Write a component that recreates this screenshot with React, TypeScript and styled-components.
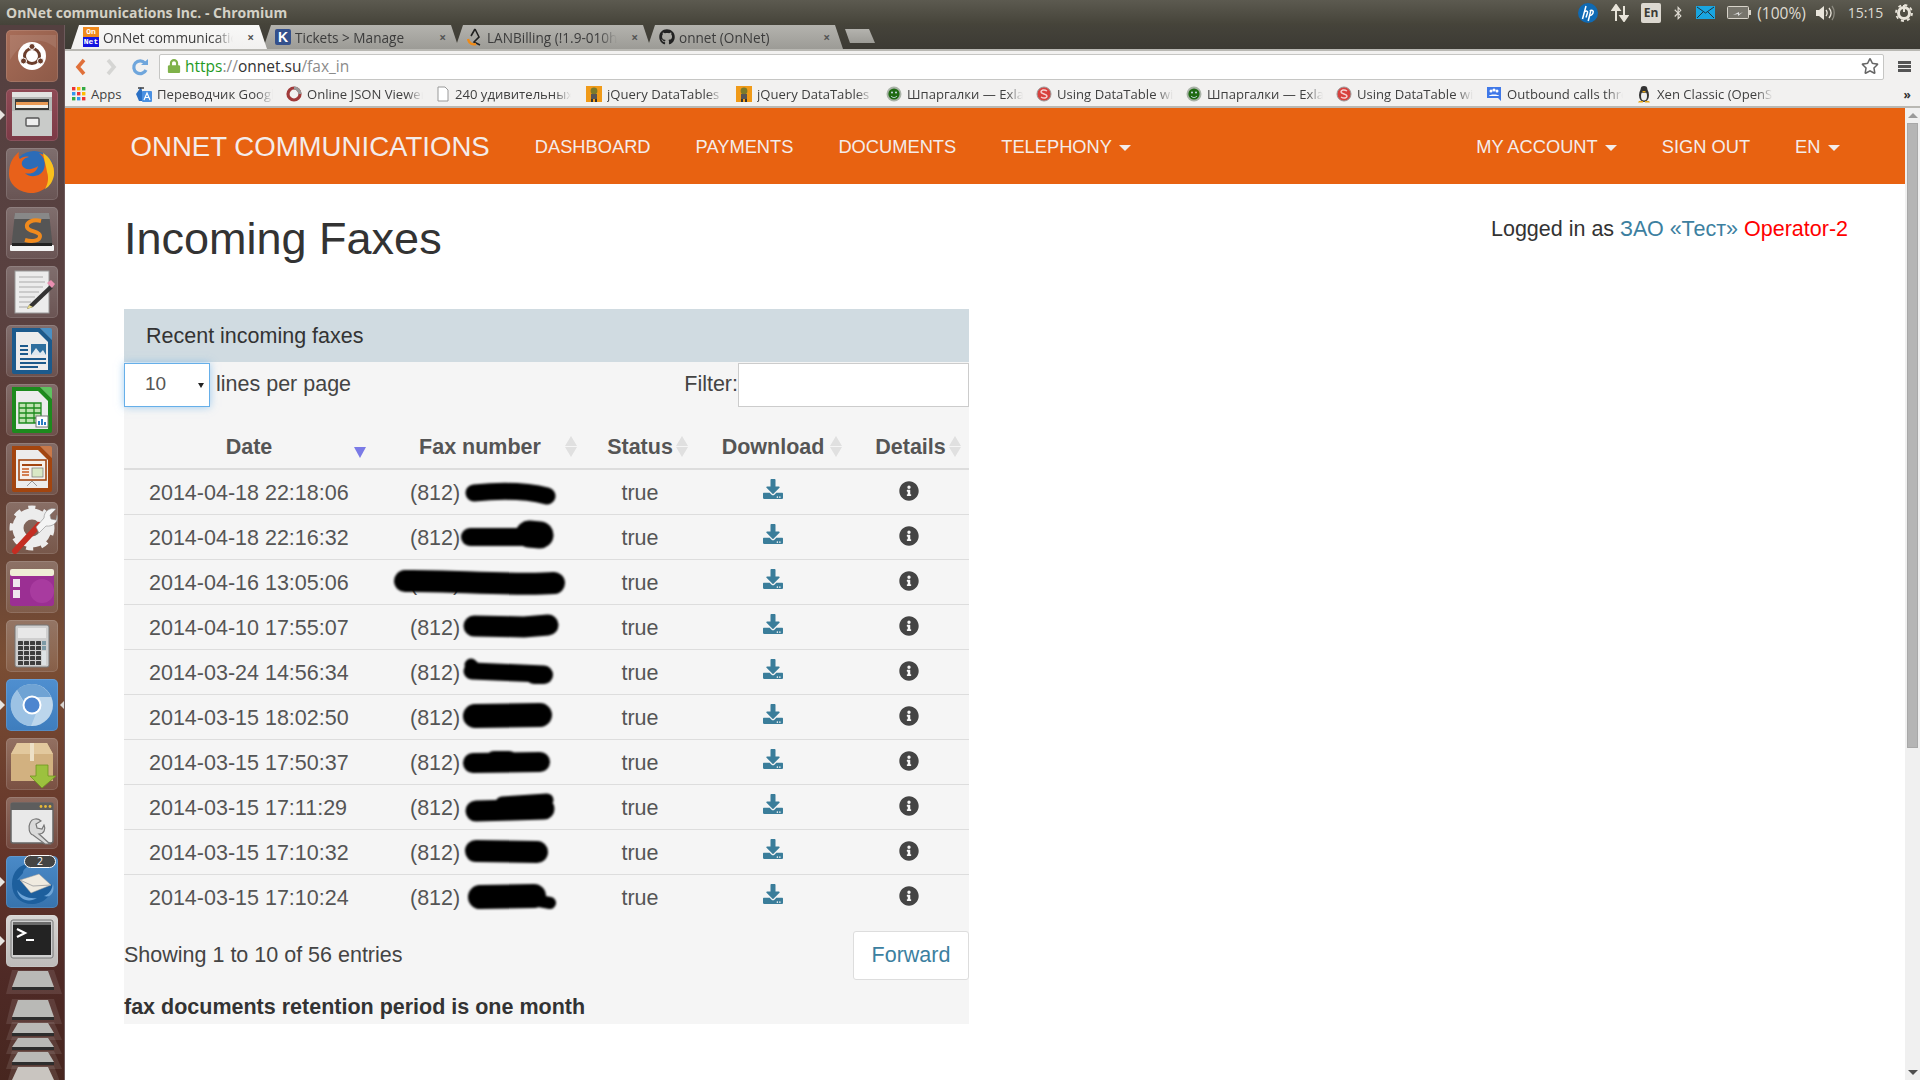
import React from "react";
import styled, { createGlobalStyle } from "styled-components";
import { FaDownload, FaInfoCircle, FaGithub, FaRegStar, FaBluetoothB, FaLock } from "react-icons/fa";

const Global = createGlobalStyle`
  html, body { margin: 0; padding: 0; width: 1920px; height: 1080px; overflow: hidden; background: #fff; }
  * { box-sizing: border-box; }
  #root { width: 1920px; height: 1080px; }
`;

const UI = `"Open Sans", "Noto Sans", sans-serif`;
const WEB = `"Liberation Sans", Arial, sans-serif`;

const Screen = styled.div`
  width: 1920px; height: 1080px; display: flex; flex-direction: column; overflow: hidden;
`;
const TitleBar = styled.header`
  height: 25px; flex: none; display: flex; align-items: center; justify-content: space-between;
  padding: 0 0 0 6px; background: linear-gradient(#5c5a50, #454339);
`;
const WindowTitle = styled.div`
  font: 700 14px ${UI}; color: #d4d1c6; white-space: nowrap;
`;
const Tray = styled.div`
  display: flex; align-items: center; height: 25px; color: #dfdbd2; font: 400 14px ${UI};
`;
const TraySlot = styled.div<{ $w: number; $size?: number }>`
  width: ${p => p.$w}px; display: flex; align-items: center; justify-content: center; height: 25px; white-space: nowrap;
  ${p => p.$size ? `font-size: ${p.$size}px;` : ""}
`;
const LangBox = styled.div`
  width: 20px; height: 20px; border-radius: 2px; background: #dcd8d0; color: #3b3a34;
  font: 700 12px ${UI}; display: flex; align-items: center; justify-content: center;
`;
const Desk = styled.div`
  flex: 1; display: flex; min-height: 0;
`;
const Launcher = styled.nav`
  width: 65px; flex: none; position: relative; overflow: hidden; display: flex; flex-direction: column; gap: 7px;
  padding: 5px 0 0 6px; border-right: 1px solid #6d5a5c;
  background: linear-gradient(#544040 0%, #5a4140 28%, #5c3c36 38%, #6a4636 52%, #7a4e34 60%, #64352a 78%, #4f2a26 90%, #47261f 100%);
`;
const Tile = styled.div<{ $bg?: string; $glow?: boolean }>`
  width: 52px; height: 52px; flex: none; border-radius: 5px; position: relative;
  background: ${p => p.$bg || "linear-gradient(rgba(255,255,255,.24), rgba(255,255,255,.1))"};
  box-shadow: inset 0 0 0 1px rgba(255,255,255,.12);
  svg { display: block; }
`;
const Pip = styled.span<{ $side: "left" | "right" }>`
  position: absolute; top: 21px; ${p => p.$side === "left" ? "left: -6px;" : "right: -7px;"}
  width: 0; height: 0; border-top: 5px solid transparent; border-bottom: 5px solid transparent;
  ${p => p.$side === "left" ? "border-left: 5px solid #e8e4e0;" : "border-right: 5px solid #d8d4d0;"}
`;
const FoldedStack = styled.div`
  margin-top: -6px; margin-left: -1px; flex: none;
`;
const Browser = styled.div`
  flex: 1; min-width: 0; display: flex; flex-direction: column;
`;
const TabStrip = styled.div`
  height: 24px; flex: none; display: flex; align-items: flex-end; padding-left: 6px; background: linear-gradient(#45433a, #3c3a34);
`;
const Tab = styled.div<{ $active?: boolean }>`
  width: 196px; height: 24px; flex: none; margin-right: -4px; padding: 0 13px 0 12px; display: flex; align-items: center; gap: 4px;
  clip-path: polygon(0 100%, 8px 0, 188px 0, 196px 100%);
  background: ${p => p.$active ? "linear-gradient(#f8f8f7, #f2f1f0)" : "linear-gradient(#b4b3ae, #9c9b96)"};
  position: relative; z-index: ${p => p.$active ? 2 : 1};
  color: #3c3c3c; font: 400 13.6px ${UI};
`;
const FadeText = styled.span<{ $w: number }>`
  width: ${p => p.$w}px; flex: none; overflow: hidden; white-space: nowrap;
  -webkit-mask-image: linear-gradient(90deg, #000 86%, transparent);
  mask-image: linear-gradient(90deg, #000 86%, transparent);
`;
const TabClose = styled.span`
  margin-left: auto; font: 700 12px ${UI}; color: #555;
`;
const NewTab = styled.div`
  width: 30px; height: 14px; margin: 0 0 6px 6px; background: linear-gradient(#b4b3ae, #9c9b96);
  clip-path: polygon(0 0, 24px 0, 30px 100%, 5px 100%);
`;
const FavOn = styled.div`
  width: 16px; height: 20px; display: flex; flex-direction: column; flex: none; overflow: hidden;
  font: 700 8px/10px "Liberation Mono", monospace; text-align: center; color: #fff;
`;
const FavPart = styled.span<{ $bg: string }>`
  height: 10px; background: ${p => p.$bg};
`;
const FavK = styled.div`
  width: 16px; height: 16px; flex: none; border-radius: 2px; background: #33508c; color: #fff;
  font: 700 14px/16px "Liberation Sans", sans-serif; text-align: center;
`;
const Toolbar = styled.div`
  height: 31px; flex: none; background: #f2f1f0; border-top: 2px solid #b9b8b3; display: flex; align-items: center; padding: 2px 0 0 0; position: relative;
`;
const NavIcon = styled.div<{ $w: number }>`
  width: ${p => p.$w}px; flex: none; display: flex; justify-content: center; align-items: center;
`;
const Omnibox = styled.div`
  width: 1725px; height: 26px; margin-left: 5px; background: #fff; border: 1px solid #c6c6c4; border-radius: 2px; display: flex; align-items: center;
  padding: 0 4px 2px 7px; font: 400 15.5px ${UI};
`;
const UrlGreen = styled.span`
  color: #1f9a1f; margin-left: 4px;
`;
const UrlDim = styled.span`
  color: #8b8b8b;
`;
const UrlHost = styled.span`
  color: #333;
`;
const Star = styled.div`
  margin-left: auto; color: #666; display: flex;
`;
const Burger = styled.div`
  width: 13px; height: 11px; margin-left: 14px; border-top: 3px solid #555; border-bottom: 3px solid #555; position: relative;
  &::after { content: ""; position: absolute; left: 0; right: 0; top: 1px; height: 3px; background: #555; }
`;
const Bookmarks = styled.div`
  height: 28px; flex: none; display: flex; align-items: center; padding: 2px 0 0 7px; background: #f2f1f0; border-bottom: 2px solid #b9b8b3;
  font: 400 13.1px ${UI}; color: #3f3f3f; position: relative;
`;
const Mark = styled.div<{ $w: number }>`
  width: ${p => p.$w}px; flex: none; display: flex; align-items: center; gap: 5px; overflow: hidden;
`;
const More = styled.div`
  margin-left: auto; margin-right: 9px; font: 700 12px ${UI}; color: #333;
`;
const PageWrap = styled.div`
  flex: 1; min-height: 0; display: flex;
`;
const Page = styled.main`
  flex: 1; min-width: 0; display: flex; flex-direction: column; background: #fff; font-family: ${WEB}; color: #333;
`;
const Scrollbar = styled.div`
  width: 15px; flex: none; background: #f0f0f0; display: flex; flex-direction: column; align-items: center; padding-top: 5px;
`;
const ScrollUp = styled.span`
  width: 0; height: 0; border-left: 5px solid transparent; border-right: 5px solid transparent; border-bottom: 5px solid #9a9a9a;
`;
const ScrollThumb = styled.span`
  width: 11px; height: 625px; background: #b5b5b5; border: 1px solid #a8a8a8; margin-top: 5px;
`;
const ScrollDown = styled.span`
  width: 0; height: 0; margin-top: auto; margin-bottom: 5px; border-left: 5px solid transparent; border-right: 5px solid transparent; border-top: 5px solid #505050;
`;
const NavBar = styled.div`
  height: 76px; flex: none; background: #e86211; display: flex; align-items: center; padding: 2px 43px 0 43px; color: #f4ecea;
`;
const Brand = styled.div`
  font-size: 27.6px; padding: 0 22.5px; white-space: nowrap;
`;
const NavItem = styled.div`
  font-size: 18.3px; padding: 0 22.5px; white-space: nowrap; display: flex; align-items: center; gap: 7px;
`;
const Caret = styled.span`
  width: 0; height: 0; border-left: 6px solid transparent; border-right: 6px solid transparent; border-top: 6px solid #f4ecea; margin-top: 2px;
`;
const Spacer = styled.div`
  flex: 1;
`;
const Content = styled.div`
  flex: 1; min-height: 0; padding: 0 57px 0 59px; position: relative;
`;
const HeadRow = styled.div`
  height: 125px; display: flex; justify-content: space-between; align-items: flex-start;
`;
const PageTitle = styled.h1`
  margin: 24px 0 0; font-size: 45px; line-height: 62px; font-weight: 400;
`;
const Logged = styled.div`
  margin-top: 33px; font-size: 21.5px; line-height: 24px; white-space: nowrap;
`;
const Link = styled.a`
  color: #3c80a0;
`;
const Red = styled.span`
  color: #f00;
`;
const Panel = styled.section`
  width: 845px; height: 715px; background: #f5f5f5; display: flex; flex-direction: column;
`;
const PanelHead = styled.div`
  height: 53px; flex: none; background: #d0dbe1; padding: 2px 0 0 22px; display: flex; align-items: center; font-size: 21.5px; color: #333;
`;
const Controls = styled.div`
  height: 46px; flex: none; display: flex; align-items: flex-start; padding-top: 1px; font-size: 21.5px;
`;
const SelectWrap = styled.div`
  position: relative; width: 86px; height: 44px; flex: none;
`;
const Select = styled.select`
  appearance: none; width: 100%; height: 100%; padding: 0 0 3px 20px; border: 1px solid #66afe9; border-radius: 0; background: #fff;
  box-shadow: 0 0 8px rgba(102,175,233,.6); font: 400 19px ${WEB}; color: #555; outline: none;
`;
const SelectCaret = styled.span`
  position: absolute; right: 6px; top: 20px; width: 0; height: 0; border-left: 3px solid transparent; border-right: 3px solid transparent; border-top: 5px solid #222;
`;
const LinesLabel = styled.span`
  margin-left: 6px; line-height: 42px; color: #444;
`;
const FilterLabel = styled.span`
  margin-left: auto; line-height: 42px; color: #444;
`;
const FilterInput = styled.input`
  width: 231px; height: 44px; border: 1px solid #ccc; background: #fff; padding: 0 10px; outline: none;
`;
const Table = styled.table`
  border-collapse: collapse; table-layout: fixed; width: 845px; flex: none; font-size: 21.5px; color: #555;
`;
const Th = styled.th<{ $w: number }>`
  width: ${p => p.$w}px; height: 61px; padding: 19px 0 0; font-weight: 700; text-align: center; position: relative; border-bottom: 2px solid #ddd; white-space: nowrap;
`;
const Td = styled.td`
  height: 45px; padding: 0; text-align: center; border-top: 1px solid #ddd; position: relative; white-space: nowrap;
`;
const TextTd = styled(Td)`
  padding-top: 4px;
`;
const TdDate = styled(TextTd)`
  text-align: left; padding-left: 25px;
`;
const TdFax = styled(TextTd)`
  text-align: left; padding-left: 36px;
`;
const TdInfo = styled(TextTd)`
  padding-right: 4px;
`;
const Tr = styled.tr`
  &:first-child td { border-top: 0; }
`;
const SortArrows = styled.span<{ $right: number }>`
  position: absolute; right: ${p => p.$right}px; top: 28px; width: 12px; height: 21px; display: flex; flex-direction: column; justify-content: space-between;
  &::before, &::after { content: ""; width: 0; height: 0; border-left: 6px solid transparent; border-right: 6px solid transparent; }
  &::before { border-bottom: 10px solid #e0e0e0; }
  &::after { border-top: 10px solid #e0e0e0; }
`;
const SortDown = styled.span`
  position: absolute; right: 8px; top: 39px; width: 0; height: 0; border-left: 6px solid transparent; border-right: 6px solid transparent; border-top: 11px solid #7a7ae6;
`;
const Blot = styled.svg`
  position: absolute; left: 0; top: 0; filter: blur(1px); pointer-events: none;
`;
const DownloadIcon = styled(FaDownload)`
  color: #3a7d9a; font-size: 20px; vertical-align: -1px; margin-top: -3px;
`;
const InfoIcon = styled(FaInfoCircle)`
  color: #444; font-size: 20px; vertical-align: -1px; margin-top: -3px;
`;
const Footer = styled.div`
  flex: none; margin-top: 12px; height: 49px; display: flex; align-items: center; justify-content: space-between; font-size: 21.5px; color: #444;
`;
const ShowText = styled.span`
  margin-top: 0;
`;
const Forward = styled.button`
  width: 116px; height: 49px; background: #fff; border: 1px solid #ddd; border-radius: 3px; font: 400 21.5px ${WEB}; color: #3c80a0; padding: 0;
`;
const Note = styled.div`
  margin-top: 15px; font-size: 21.5px; font-weight: 700; color: #333; line-height: 24px;
`;

/* ---------- launcher drawings ---------- */
const UbuntuIcon = () => (
  <svg width="52" height="52" viewBox="0 0 52 52">
    <path d="M4 30C16 8 36 6 50 18V5H4z" fill="#fff" opacity=".1" />
    <circle cx="26" cy="26" r="14" fill="#fff" />
    <circle cx="26" cy="26" r="7.5" fill="none" stroke="#6b3e2c" strokeWidth="3" />
    <circle cx="26" cy="16.5" r="3" fill="#6b3e2c" stroke="#fff" strokeWidth="1" />
    <circle cx="17.5" cy="31" r="3" fill="#6b3e2c" stroke="#fff" strokeWidth="1" />
    <circle cx="34.5" cy="31" r="3" fill="#6b3e2c" stroke="#fff" strokeWidth="1" />
  </svg>
);
const FilesIcon = () => (
  <svg width="52" height="52" viewBox="0 0 52 52">
    <rect x="6" y="3" width="40" height="44" rx="2" fill="#b5b7b5" />
    <rect x="6" y="3" width="40" height="5" fill="#e2e2e0" />
    <rect x="9" y="10" width="34" height="11" fill="#3a3a38" />
    <rect x="10" y="13" width="32" height="5" fill="#e89a55" />
    <rect x="10" y="16" width="32" height="3" fill="#f3f0ea" />
    <rect x="6" y="22" width="40" height="25" fill="#c9cbc9" />
    <rect x="20" y="29" width="13" height="8" rx="1" fill="#eee" stroke="#555" strokeWidth="1.4" />
  </svg>
);
const FirefoxIcon = () => (
  <svg width="52" height="52" viewBox="0 0 52 52">
    <circle cx="28" cy="23" r="20" fill="#2b6cb8" />
    <path d="M3 26C3 14 8 8 13 4c-1 4 0 6 1 7 2-2 6-3 9-2-5 1-8 4-7 8 1 3 5 5 9 4 5-1 7-3 7-3-1 6-7 9-13 7 5 5 14 4 18-2 4-7 1-14-4-18 8 2 15 10 15 18 0 12-11 22-22 22S3 38 3 26z" fill="#e8611a" />
    <path d="M37 5c7 4 12 13 11 22-1 6-4 11-9 14 3-5 4-11 2-17-1-6-3-13-4-19z" fill="#f9c11d" />
  </svg>
);
const SublimeIcon = () => (
  <svg width="52" height="52" viewBox="0 0 52 52">
    <path d="M9 6h34l4 36H5z" fill="#555" />
    <path d="M9 6h34l1 6H8z" fill="#888" />
    <rect x="4" y="38" width="44" height="6" rx="1" fill="#f2f2f2" />
    <rect x="6" y="36" width="40" height="3" fill="#222" />
    <path d="M35 14c-8-2-15 1-14 6s13 4 13 9-8 6-15 4" fill="none" stroke="#f08a1d" strokeWidth="4" />
  </svg>
);
const EditorIcon = () => (
  <svg width="52" height="52" viewBox="0 0 52 52">
    <rect x="9" y="5" width="34" height="42" fill="#ececec" stroke="#999" />
    <path d="M13 11h24M13 16h26M13 21h24M13 26h20M13 31h16M13 36h12M13 41h10" stroke="#aaa" strokeWidth="1.2" />
    <path d="M23 39l21-20 3 3-20 19-6 2z" fill="#333" />
    <path d="M41 17l4-3 4 4-3 4z" fill="#e88fb0" />
    <path d="M21 43l2-4 4 2z" fill="#e9dc8a" />
  </svg>
);
const OfficeIcon = ({ frame, corner, kind }: { frame: string; corner: string; kind: "w" | "c" | "p" }) => (
  <svg width="52" height="52" viewBox="0 0 52 52">
    <path d="M6 3h28l12 12v32a2 2 0 0 1-2 2H8a2 2 0 0 1-2-2z" fill={frame} />
    <path d="M34 3h10a2 2 0 0 1 2 2v10z" fill={corner} />
    <path d="M10 7h22l10 10v28H10z" fill="#ececec" />
    {kind === "w" && (
      <>
        <path d="M14 21h8M14 25h8M14 29h8M14 34h26M14 38h26M14 42h18" stroke={frame} strokeWidth="2" />
        <rect x="25" y="19" width="15" height="11" fill="#2f6f9e" />
        <path d="M25 30l5-7 4 5 3-3 3 5z" fill="#dfe8ee" />
      </>
    )}
    {kind === "c" && (
      <>
        <path d="M13 19h22v20H13zM13 24h22M13 29h22M13 34h22M20 19v20M28 19v20" fill="#bfe3b0" stroke={frame} strokeWidth="1.3" />
        <rect x="30" y="32" width="12" height="11" fill="#fff" stroke="#777" />
        <path d="M33 41v-4M36 41v-6M39 41v-3" stroke="#2b7bc0" strokeWidth="2" />
      </>
    )}
    {kind === "p" && (
      <>
        <rect x="13" y="17" width="27" height="20" fill="#f5f0ea" stroke={frame} strokeWidth="1.6" />
        <path d="M16 22h20" stroke={frame} strokeWidth="2" />
        <path d="M16 26h7M16 29h7M16 32h7" stroke="#c75b20" strokeWidth="1.6" />
        <rect x="26" y="25" width="11" height="9" fill="#d9e8c5" stroke="#777" strokeWidth=".7" />
        <path d="M21 43l5-5 5 5" fill="none" stroke="#999" />
      </>
    )}
  </svg>
);
const SettingsIcon = () => (
  <svg width="52" height="52" viewBox="0 0 52 52">
    <circle cx="26" cy="26" r="14" fill="none" stroke="#ececec" strokeWidth="11" />
    <circle cx="26" cy="26" r="20" fill="none" stroke="#ececec" strokeWidth="5" strokeDasharray="7 8" />
    <path d="M9 49L33 23" stroke="#c42d22" strokeWidth="6" strokeLinecap="round" />
    <path d="M30 25l8-9c0-7 6-11 12-9l-6 6 1 4 5 1 1-5c2 7-4 12-11 11l-7 7z" fill="#f4f4f4" stroke="#888" strokeWidth=".6" />
  </svg>
);
const WorkspaceIcon = () => (
  <svg width="52" height="52" viewBox="0 0 52 52">
    <rect x="4" y="8" width="44" height="37" rx="3" fill="#9b2f93" />
    <rect x="4" y="8" width="44" height="7" rx="2" fill="#efeed6" />
    <rect x="7" y="18" width="7" height="8" fill="#efe6ee" />
    <rect x="7" y="29" width="7" height="8" fill="#efe6ee" />
    <circle cx="36" cy="30" r="12" fill="#c65bbd" opacity=".3" />
  </svg>
);
const CalcIcon = () => (
  <svg width="52" height="52" viewBox="0 0 52 52">
    <rect x="9" y="5" width="34" height="42" rx="2" fill="#cfcfcf" stroke="#777" />
    <rect x="12" y="8" width="28" height="10" fill="#e8e8e8" />
    {[21, 26, 31, 36, 41].map(y =>
      [12, 18, 24, 30].map(x => <rect key={`${x}-${y}`} x={x} y={y} width="5" height="4" rx=".6" fill="#3d3d3d" />)
    )}
    <rect x="36" y="21" width="4" height="4" fill="#7d9aa6" />
    <rect x="36" y="26" width="4" height="4" fill="#7d9aa6" />
    <rect x="36" y="31" width="4" height="14" fill="#dde2e4" />
  </svg>
);
const ChromiumIcon = () => (
  <svg width="52" height="52" viewBox="0 0 52 52">
    <circle cx="26" cy="26" r="21" fill="#bcd6ec" />
    <path d="M26 5a21 21 0 0 1 19 13H26a8 8 0 0 0-8 5L11 11A21 21 0 0 1 26 5z" fill="#6fa3d4" />
    <path d="M11 11l9 17c2 4 7 6 11 4l-6 15A21 21 0 0 1 11 11z" fill="#9cc2e4" />
    <circle cx="26" cy="26" r="9.5" fill="#fff" />
    <circle cx="26" cy="26" r="7.5" fill="#4e86cf" />
  </svg>
);
const PackageIcon = () => (
  <svg width="52" height="52" viewBox="0 0 52 52">
    <path d="M11 5h30l6 11v27H5V16z" fill="#d2b180" />
    <path d="M11 5h30l6 11H5z" fill="#e2c89d" />
    <rect x="24" y="5" width="4" height="18" fill="#ede0c6" />
    <path d="M30 27h12v11h8L36 50 24 38h6z" fill="#9cc13e" stroke="#6f9420" strokeWidth=".8" />
  </svg>
);
const ToolIcon = () => (
  <svg width="52" height="52" viewBox="0 0 52 52">
    <rect x="5" y="6" width="42" height="40" rx="2" fill="#e9e9e9" stroke="#666" strokeWidth="1.5" />
    <rect x="5" y="6" width="42" height="7" fill="#5d5d5d" />
    <circle cx="35" cy="9.5" r="1.4" fill="#e8b83a" /><circle cx="39.5" cy="9.5" r="1.4" fill="#e8b83a" /><circle cx="44" cy="9.5" r="1.4" fill="#e8b83a" />
    <path d="M24 26c2-5 8-5 11-2l-5 3 1 4 5 1 2-4c2 4 0 9-5 9l11 10h-5l-12-9c-4-1-5-8-3-12z" fill="#dadada" stroke="#777" strokeWidth="1.2" />
  </svg>
);
const BirdIcon = () => (
  <svg width="52" height="52" viewBox="0 0 52 52">
    <path d="M6 28C6 14 16 6 28 8c-8 2-11 6-11 9l-6 7 8-1 24 4 3 2c0 12-10 19-20 19C14 48 6 40 6 28z" fill="#1d5f9d" />
    <path d="M14 24l19-6 12 11-20 8z" fill="#f0ebe0" stroke="#999" strokeWidth=".5" />
    <path d="M14 24l13 6 18-1" fill="none" stroke="#aaa" />
    <path d="M38 40c5-2 8-6 9-12 2 8-2 14-9 12zM11 34c4 6 12 9 20 8-8 5-18 2-20-8z" fill="#6ea5d8" />
  </svg>
);
const Badge = styled.span`
  position: absolute; right: 2px; top: -1px; width: 32px; height: 13px; border-radius: 7px; background: #444; border: 1.5px solid #fff;
  color: #fff; font: 400 10.5px/10px ${UI}; text-align: center;
`;
const TerminalIcon = () => (
  <svg width="52" height="52" viewBox="0 0 52 52">
    <rect x="5" y="5" width="42" height="38" rx="2" fill="#cfcfcf" stroke="#777" />
    <rect x="7" y="7" width="38" height="33" fill="#232323" />
    <rect x="7" y="7" width="38" height="3" fill="#6b6b6b" />
    <path d="M11 14l8 4-8 4" fill="none" stroke="#fff" strokeWidth="2.2" />
    <path d="M20 25h8" stroke="#fff" strokeWidth="2" />
  </svg>
);
const Folded = () => (
  <svg width="58" height="118" viewBox="0 0 58 118">
    {[[2, 20], [31, 21], [54, 14], [69, 13], [83, 14], [98, 17]].map(([y, h], i) => (
      <g key={i}>
        <path d={`M7 ${y}H49L57 ${y + h + 4}H1z`} fill="#fff" opacity=".1" />
        <path d={`M13 ${y + 1}H43L49 ${y + h - 3}H7z`} fill={i === 5 ? "#c9c5c0" : "#b9b9b6"} />
        <path d={`M7 ${y + h - 3}H49V${y + h}H7z`} fill="#2d2d2d" />
      </g>
    ))}
  </svg>
);

/* ---------- little favicons ---------- */
const AppsGrid = () => (
  <svg width="14" height="14" viewBox="0 0 14 14">
    {["#e33", "#fb0", "#3a4", "#39e", "#e33", "#fb0", "#3a4", "#39e", "#e33"].map((c, i) => (
      <rect key={i} x={(i % 3) * 5} y={Math.floor(i / 3) * 5} width="3.4" height="3.4" fill={c} />
    ))}
  </svg>
);
const Translate = () => (
  <svg width="16" height="18" viewBox="0 0 16 18">
    <path d="M0 9L5 2l2 7 3 7H3z" fill="#2a6fc4" />
    <rect x="6" y="6" width="10" height="11" rx="1" fill="#4a90e2" />
    <path d="M8 15l3-7 3 7M9.2 12.5h3.6" stroke="#fff" fill="none" strokeWidth="1.2" />
    <path d="M2 3h6" stroke="#333" strokeWidth="1.4" />
  </svg>
);
const JsonFav = () => (
  <svg width="16" height="18" viewBox="0 0 16 18">
    <circle cx="8" cy="9" r="6" fill="none" stroke="#a03a3a" strokeWidth="3.2" />
    <path d="M8 3a6 6 0 0 1 6 6" fill="none" stroke="#999" strokeWidth="3.2" />
  </svg>
);
const DocFav = () => (
  <svg width="14" height="18" viewBox="0 0 14 18">
    <path d="M2 2h7l3 3v11H2z" fill="#fff" stroke="#999" />
  </svg>
);
const JqFav = () => (
  <svg width="16" height="18" viewBox="0 0 16 18">
    <rect y="1" width="16" height="16" fill="#f09a18" />
    <circle cx="8" cy="6" r="3.4" fill="#7a7a2a" />
    <rect x="5" y="9" width="6" height="5" fill="#555" />
    <rect x="5" y="14" width="2" height="3" fill="#333" /><rect x="9" y="14" width="2" height="3" fill="#333" />
  </svg>
);
const SmileFav = () => (
  <svg width="16" height="18" viewBox="0 0 16 18">
    <circle cx="8" cy="9" r="7.5" fill="#aab3a8" />
    <circle cx="8" cy="9" r="5.6" fill="#1e6a12" />
    <circle cx="6" cy="7.5" r="1" fill="#cde" /><circle cx="10" cy="7.5" r="1" fill="#cde" />
    <path d="M5 11c2 2 4 2 6 0" stroke="#cde" fill="none" />
  </svg>
);
const RedFav = () => (
  <svg width="16" height="18" viewBox="0 0 16 18">
    <circle cx="8" cy="9" r="7" fill="#d8413e" stroke="#999" />
    <path d="M11 6c-3-2-6-1-6 1s6 2 6 4-3 3-6 1" stroke="#f5d0d0" fill="none" strokeWidth="1.5" />
  </svg>
);
const MeetFav = () => (
  <svg width="16" height="18" viewBox="0 0 16 18">
    <path d="M1 2h14v14l-3-3H1z" fill="#3f78e8" />
    <circle cx="5" cy="6" r="1.5" fill="#fff" /><circle cx="11" cy="6" r="1.5" fill="#fff" /><circle cx="8" cy="5" r="1.6" fill="#fff" />
    <path d="M3 11c0-2 10-2 10 0z" fill="#fff" />
  </svg>
);
const TuxFav = () => (
  <svg width="16" height="18" viewBox="0 0 16 18">
    <ellipse cx="8" cy="10" rx="5" ry="7" fill="#333" />
    <ellipse cx="8" cy="11" rx="3" ry="4.6" fill="#eee" />
    <circle cx="8" cy="4.5" r="3.4" fill="#333" />
    <path d="M6 6h4l-2 2z" fill="#e6a81d" />
    <path d="M3 16h4v1.5H2zM9 16h4l1 1.5H9z" fill="#e6a81d" />
  </svg>
);
const LanFav = () => (
  <svg width="16" height="20" viewBox="0 0 16 20">
    <path d="M8 2l4 8-5 5 6 3M8 2L4 9" fill="none" stroke="#222" strokeWidth="1.6" />
    <path d="M1 12c1 5 5 6 8 5" fill="none" stroke="#ef8a17" strokeWidth="2.4" />
  </svg>
);

const Back = () => (
  <svg width="14" height="18" viewBox="0 0 14 18"><path d="M10 2L4 9l6 7" fill="none" stroke="#e0703a" strokeWidth="3.6" /></svg>
);
const Fwd = () => (
  <svg width="14" height="18" viewBox="0 0 14 18"><path d="M4 2l6 7-6 7" fill="none" stroke="#d5d5d3" strokeWidth="3.6" /></svg>
);
const Reload = () => (
  <svg width="18" height="18" viewBox="0 0 18 18">
    <path d="M14 5a6.4 6.4 0 1 0 1 7" fill="none" stroke="#6fa6dc" strokeWidth="3.2" />
    <path d="M10 7h7V1z" fill="#6fa6dc" />
  </svg>
);

/* ---------- tray drawings ---------- */
const HpLogo = () => (
  <svg width="20" height="20" viewBox="0 0 20 20">
    <circle cx="10" cy="10" r="10" fill="#0f6ab4" />
    <path d="M8 3L4.5 16M6.5 9c2-1.600 3.500-1 3 .8L8 14.500M13 7l-2.800 11M11.800 8c2.600-1.500 4 0 3.200 2s-2.500 3-4 2" fill="none" stroke="#fff" strokeWidth="1.500" />
  </svg>
);
const UpDown = () => (
  <svg width="18" height="18" viewBox="0 0 18 18">
    <path d="M5 17V5M1.500 6L5 1l3.500 5z" stroke="#e8e4da" fill="#e8e4da" strokeWidth="2" />
    <path d="M13 2v11M9.500 12L13 17l3.500-5z" stroke="#e8e4da" fill="#e8e4da" strokeWidth="2" />
  </svg>
);
const MailTray = () => (
  <svg width="19" height="13" viewBox="0 0 19 13">
    <rect width="19" height="13" fill="#19a5e0" />
    <path d="M1 1l8.500 6L18 1M1 12l6-6M18 12l-6-6" stroke="#20343f" fill="none" />
  </svg>
);
const Battery = () => (
  <svg width="24" height="13" viewBox="0 0 24 13">
    <rect x=".5" y=".5" width="21" height="12" rx="1" fill="#77756c" stroke="#d8d4ca" />
    <rect x="22" y="4" width="2" height="5" fill="#d8d4ca" />
    <path d="M6 9l6-3v2l4-2-5 4V8z" fill="#ddd" />
  </svg>
);
const Speaker = () => (
  <svg width="20" height="16" viewBox="0 0 20 16">
    <path d="M1 5h3l5-4v14l-5-4H1z" fill="#e8e4da" />
    <path d="M11 5c1.500 2 1.500 4 0 6M14 3c2.500 3 2.500 7 0 10" fill="none" stroke="#e8e4da" strokeWidth="1.300" />
    <path d="M17 1c3 4 3 10 0 14" fill="none" stroke="#8a887e" strokeWidth="1.300" />
  </svg>
);
const Power = () => (
  <svg width="18" height="18" viewBox="0 0 18 18">
    <circle cx="9" cy="9" r="5.500" fill="none" stroke="#e8e4da" strokeWidth="3" />
    <circle cx="9" cy="9" r="8" fill="none" stroke="#e8e4da" strokeWidth="1.800" strokeDasharray="3 3.300" />
    <path d="M9 1v7" stroke="#e8e4da" strokeWidth="2" />
  </svg>
);

/* ---------- data ---------- */
const bookmarks: [React.ReactNode, string][] = [
  [<Translate />, "Переводчик Google"],
  [<JsonFav />, "Online JSON Viewer"],
  [<DocFav />, "240 удивительных"],
  [<JqFav />, "jQuery DataTables"],
  [<JqFav />, "jQuery DataTables"],
  [<SmileFav />, "Шпаргалки — Exlab"],
  [<RedFav />, "Using DataTable with"],
  [<SmileFav />, "Шпаргалки — Exlab"],
  [<RedFav />, "Using DataTable with"],
  [<MeetFav />, "Outbound calls through"],
  [<TuxFav />, "Xen Classic (OpenSuse"],
];

type Stroke = [string, number];
const rows: { date: string; blot: Stroke[] }[] = [
  { date: "2014-04-18 22:18:06", blot: [["M100 23C120 21 150 20 173 26", 17]] },
  { date: "2014-04-18 22:16:32", blot: [["M96 22L150 22", 18], ["M155 19L166 20", 27]] },
  { date: "2014-04-16 13:05:06", blot: [["M31 21C70 20 140 26 180 23", 22]] },
  { date: "2014-04-10 17:55:07", blot: [["M100 21L150 22L174 20", 21]] },
  { date: "2014-03-24 14:56:34", blot: [["M98 21L170 24", 17], ["M97 15L100 18", 13], ["M160 25L170 25", 18]] },
  { date: "2014-03-15 18:02:50", blot: [["M101 21L166 20", 24]] },
  { date: "2014-03-15 17:50:37", blot: [["M99 23L166 22", 20], ["M120 19L135 19", 16]] },
  { date: "2014-03-15 17:11:29", blot: [["M102 26L170 24", 21], ["M128 18L173 15", 13]] },
  { date: "2014-03-15 17:10:32", blot: [["M102 21L163 22", 22]] },
  { date: "2014-03-15 17:10:24", blot: [["M106 22L160 21", 24], ["M165 26L176 28", 12]] },
];

export default function App() {
  return (
    <Screen>
      <Global />
      <TitleBar>
        <WindowTitle>OnNet communications Inc. - Chromium</WindowTitle>
        <Tray>
          <TraySlot $w={33}><HpLogo /></TraySlot>
          <TraySlot $w={31}><UpDown /></TraySlot>
          <TraySlot $w={32}><LangBox>En</LangBox></TraySlot>
          <TraySlot $w={22}><FaBluetoothB size={14} /></TraySlot>
          <TraySlot $w={33}><MailTray /></TraySlot>
          <TraySlot $w={34}><Battery /></TraySlot>
          <TraySlot $w={51} $size={15.5}>(100%)</TraySlot>
          <TraySlot $w={36}><Speaker /></TraySlot>
          <TraySlot $w={45}>15:15</TraySlot>
          <TraySlot $w={32}><Power /></TraySlot>
        </Tray>
      </TitleBar>
      <Desk>
        <Launcher>
          <Tile $bg="linear-gradient(135deg,#a86d58,#8d5a48)"><UbuntuIcon /></Tile>
          <Tile $bg="linear-gradient(#8f4a55,#7c3a46)"><FilesIcon /><Pip $side="left" /></Tile>
          <Tile><FirefoxIcon /></Tile>
          <Tile><SublimeIcon /></Tile>
          <Tile><EditorIcon /></Tile>
          <Tile><OfficeIcon frame="#1c5a8c" corner="#4a90c4" kind="w" /></Tile>
          <Tile><OfficeIcon frame="#1d8a1d" corner="#5fc25f" kind="c" /></Tile>
          <Tile><OfficeIcon frame="#a3450f" corner="#c9794a" kind="p" /></Tile>
          <Tile><SettingsIcon /></Tile>
          <Tile><WorkspaceIcon /></Tile>
          <Tile><CalcIcon /></Tile>
          <Tile $bg="linear-gradient(#4f8fd0,#3e7dbd)"><ChromiumIcon /><Pip $side="left" /><Pip $side="right" /></Tile>
          <Tile><PackageIcon /></Tile>
          <Tile><ToolIcon /></Tile>
          <Tile $bg="linear-gradient(#4a8ac8,#3773ad)"><BirdIcon /><Badge>2</Badge><Pip $side="left" /></Tile>
          <Tile $bg="linear-gradient(#d8d6d4,#bdbbb9)"><TerminalIcon /><Pip $side="left" /></Tile>
          <FoldedStack><Folded /></FoldedStack>
        </Launcher>
        <Browser>
          <TabStrip>
            <Tab $active>
              <FavOn><FavPart $bg="#f08a1d">On</FavPart><FavPart $bg="#1414e0">Net</FavPart></FavOn>
              <FadeText $w={130}>OnNet communications</FadeText>
              <TabClose>×</TabClose>
            </Tab>
            <Tab>
              <FavK>K</FavK>
              <FadeText $w={130}>Tickets &gt; Manage</FadeText>
              <TabClose>×</TabClose>
            </Tab>
            <Tab>
              <LanFav />
              <FadeText $w={130}>LANBilling (!1.9-010hf</FadeText>
              <TabClose>×</TabClose>
            </Tab>
            <Tab>
              <FaGithub size={16} color="#222" />
              <FadeText $w={130}>onnet (OnNet)</FadeText>
              <TabClose>×</TabClose>
            </Tab>
            <NewTab />
          </TabStrip>
          <Toolbar>
            <NavIcon $w={31}><Back /></NavIcon>
            <NavIcon $w={29}><Fwd /></NavIcon>
            <NavIcon $w={29}><Reload /></NavIcon>
            <Omnibox>
              <FaLock size={14} color="#7fb24a" />
              <UrlGreen>https</UrlGreen><UrlDim>://</UrlDim><UrlHost>onnet.su</UrlHost><UrlDim>/fax_in</UrlDim>
              <Star><FaRegStar size={18} /></Star>
            </Omnibox>
            <Burger />
          </Toolbar>
          <Bookmarks>
            <Mark $w={64}><AppsGrid /><span>Apps</span></Mark>
            {bookmarks.map(([icon, label], i) => (
              <Mark $w={150} key={i}>{icon}<FadeText $w={116}>{label}</FadeText></Mark>
            ))}
            <More>»</More>
          </Bookmarks>
          <PageWrap>
            <Page>
              <NavBar>
                <Brand>ONNET COMMUNICATIONS</Brand>
                <NavItem>DASHBOARD</NavItem>
                <NavItem>PAYMENTS</NavItem>
                <NavItem>DOCUMENTS</NavItem>
                <NavItem>TELEPHONY <Caret /></NavItem>
                <Spacer />
                <NavItem>MY ACCOUNT <Caret /></NavItem>
                <NavItem>SIGN OUT</NavItem>
                <NavItem>EN <Caret /></NavItem>
              </NavBar>
              <Content>
                <HeadRow>
                  <PageTitle>Incoming Faxes</PageTitle>
                  <Logged>Logged in as <Link>ЗАО «Тест»</Link> <Red>Operator-2</Red></Logged>
                </HeadRow>
                <Panel>
                  <PanelHead>Recent incoming faxes</PanelHead>
                  <Controls>
                    <SelectWrap>
                      <Select defaultValue="10"><option>10</option><option>25</option><option>50</option></Select>
                      <SelectCaret />
                    </SelectWrap>
                    <LinesLabel>lines per page</LinesLabel>
                    <FilterLabel>Filter:</FilterLabel>
                    <FilterInput />
                  </Controls>
                  <Table>
                    <thead>
                      <tr>
                        <Th $w={250}>Date<SortDown /></Th>
                        <Th $w={212}>Fax number<SortArrows $right={9} /></Th>
                        <Th $w={108}>Status<SortArrows $right={6} /></Th>
                        <Th $w={158}>Download<SortArrows $right={10} /></Th>
                        <Th $w={117}>Details<SortArrows $right={8} /></Th>
                      </tr>
                    </thead>
                    <tbody>
                      {rows.map(r => (
                        <Tr key={r.date}>
                          <TdDate>{r.date}</TdDate>
                          <TdFax>
                            (812)
                            <Blot width="212" height="45" viewBox="0 0 212 45">
                              {r.blot.map(([d, w], i) => (
                                <path key={i} d={d} fill="none" stroke="#000" strokeWidth={w} strokeLinecap="round" />
                              ))}
                            </Blot>
                          </TdFax>
                          <TextTd>true</TextTd>
                          <Td><DownloadIcon /></Td>
                          <TdInfo><InfoIcon /></TdInfo>
                        </Tr>
                      ))}
                    </tbody>
                  </Table>
                  <Footer>
                    <ShowText>Showing 1 to 10 of 56 entries</ShowText>
                    <Forward>Forward</Forward>
                  </Footer>
                  <Note>fax documents retention period is one month</Note>
                </Panel>
              </Content>
            </Page>
            <Scrollbar>
              <ScrollUp /><ScrollThumb /><ScrollDown />
            </Scrollbar>
          </PageWrap>
        </Browser>
      </Desk>
    </Screen>
  );
}
